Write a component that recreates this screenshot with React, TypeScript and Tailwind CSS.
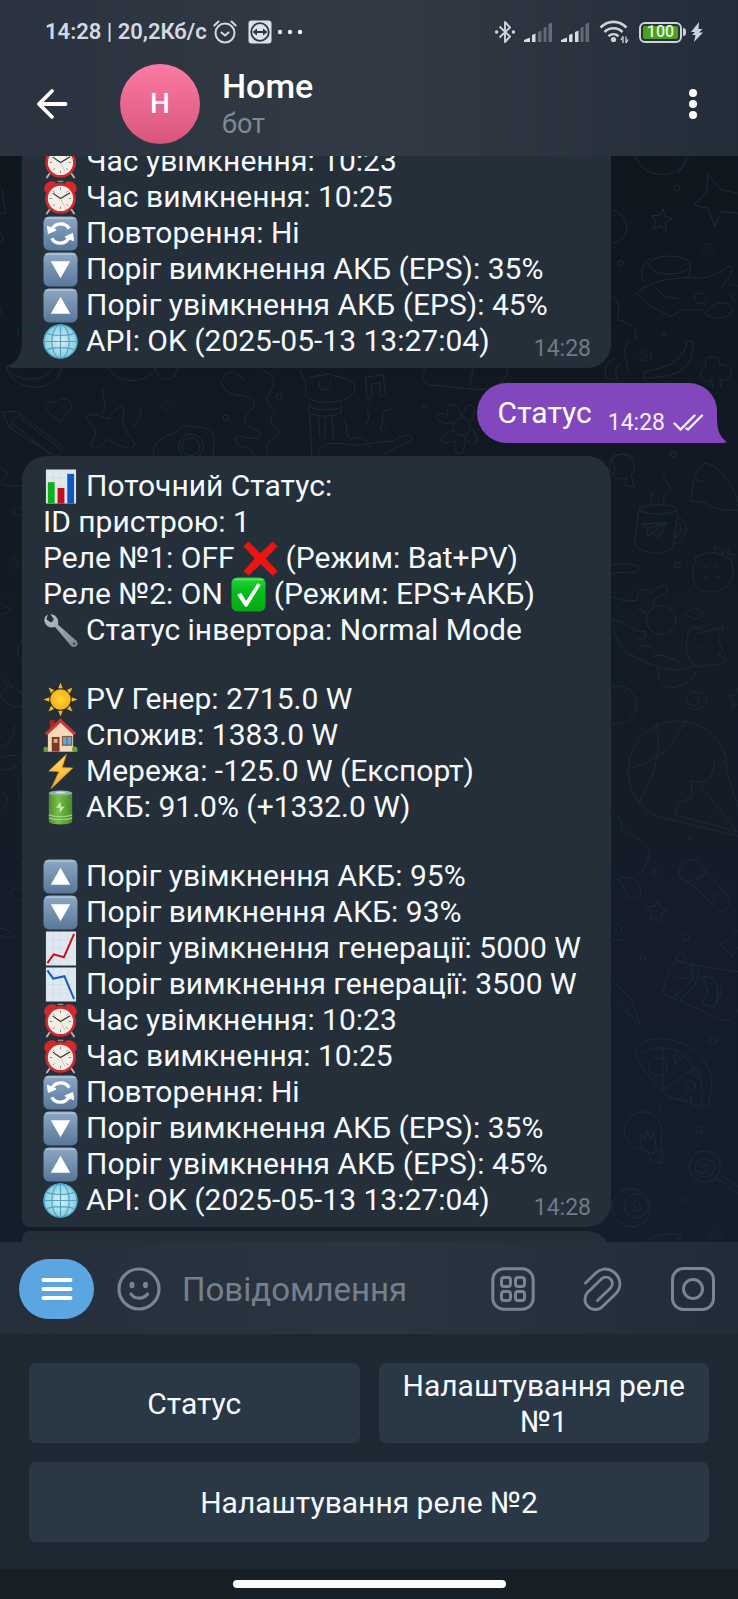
import type { ReactNode } from "react";

type EmojiName =
  | "chart"
  | "cross"
  | "check"
  | "wrench"
  | "sun"
  | "house"
  | "bolt"
  | "battery"
  | "up"
  | "down"
  | "rise"
  | "fall"
  | "alarm"
  | "repeat"
  | "globe";

const LABELS: Record<EmojiName, string> = {
  chart: "📊",
  cross: "❌",
  check: "✅",
  wrench: "🔧",
  sun: "☀️",
  house: "🏠",
  bolt: "⚡",
  battery: "🔋",
  up: "🔼",
  down: "🔽",
  rise: "📈",
  fall: "📉",
  alarm: "⏰",
  repeat: "🔄",
  globe: "🌐",
};

function Tile({ children }: { children: ReactNode }) {
  return (
    <>
      <rect x="0.5" y="0.5" width="35" height="35" rx="6" fill="url(#tile)" />
      <path d="M3 2.2H33" stroke="#b9cadb" strokeWidth="1.2" strokeLinecap="round" />
      {children}
    </>
  );
}

const ART: Record<EmojiName, ReactNode> = {
  chart: (
    <>
      <rect x="3" y="0.5" width="31" height="35" fill="#dfe7f0" />
      <path d="M3 9H34M3 18H34M3 27H34M10.5 1V35M18 1V35M25.500 1V35" stroke="#d0dbe7" strokeWidth="0.7" />
      <rect x="5" y="13.500" width="7" height="22" fill="#0fb11b" />
      <rect x="15" y="19.500" width="7" height="16" fill="#c0101b" />
      <rect x="25" y="5" width="7" height="30.500" fill="#0d57bd" />
    </>
  ),
  cross: (
    <path
      d="M5.500 1 18 13 30.500 1 35 5.500 23 18 35 31 31 35.500 18 23.500 6 35 1 31 12.500 18 1 5.500Z"
      fill="#f0130f"
      stroke="#f0130f"
      strokeLinejoin="round"
    />
  ),
  check: (
    <>
      <rect x="0.5" y="0.5" width="35" height="35" rx="6" fill="url(#green)" />
      <path d="M3 2.500H33" stroke="#5fe46b" strokeWidth="1.500" strokeLinecap="round" />
      <path d="M7 18.500 10.500 17 15.500 25.500 27.500 7 30 8 16.500 30 14.500 30Z" fill="#fff" stroke="#fff" strokeLinejoin="round" />
    </>
  ),
  wrench: (
    <>
      <path
        d="M5 1.500 C2 3 0.500 6.500 2 10 C3.500 14 8 16 12.500 14.500 L28 33 C30 36 34.500 35.500 35.500 32.500 C36 30 34.500 28.500 32.500 27 L15.500 12 C16.500 8 15 4 11 2 C9.500 1.500 8.500 1.200 7.500 1.300 L11 6 C11 8 9.500 9.500 7.500 9.500 L3.500 6.500Z"
        fill="url(#steel)"
      />
      <circle cx="32" cy="31.500" r="1.400" fill="#4b525b" />
    </>
  ),
  sun: (
    <>
      <g fill="#f8b51e">
        {[0, 45, 90, 135, 180, 225, 270, 315].map((a) => (
          <path key={a} d="M18 0.500 20.300 6.500H15.700Z" transform={`rotate(${a} 18 18)`} />
        ))}
      </g>
      <circle cx="18" cy="18" r="10.500" fill="url(#sunny)" />
    </>
  ),
  house: (
    <>
      <path d="M0.500 35V32.500H35.500V35Z" fill="#5b8f2c" />
      <path d="M7 2H12V9L7 14Z" fill="#9b2a22" />
      <path d="M5 15 18 3 31 15V34.500H5Z" fill="#f4d9bc" />
      <path d="M18 0.500 34 15.500 32 18 18 5 4 18 2 15.500Z" fill="#c23a35" />
      <rect x="9" y="19.500" width="8" height="15" fill="#7d3a20" />
      <rect x="11" y="21.500" width="4" height="4" fill="#d8b191" />
      <rect x="20" y="19" width="9.500" height="9" fill="#5fa6d8" stroke="#8a5a3c" strokeWidth="1.200" />
      <path d="M24.700 19V28" stroke="#8a5a3c" />
      <circle cx="3" cy="32" r="2.500" fill="#6aa334" />
      <circle cx="32.500" cy="32" r="2.800" fill="#6aa334" />
    </>
  ),
  bolt: (
    <path
      d="M24 0.500 6 17.500 16.500 18 8.500 35.500 30.500 14.500 19.500 14Z"
      fill="url(#spark)"
      stroke="#e9982d"
      strokeWidth="0.8"
      strokeLinejoin="round"
    />
  ),
  battery: (
    <>
      <path d="M6 3V32.500C6 36.500 30 36.500 30 32.500V3Z" fill="url(#cell)" />
      <ellipse cx="18" cy="3" rx="12" ry="2.500" fill="#8db8a6" />
      <ellipse cx="18" cy="2.600" rx="5" ry="1.100" fill="#d5e3dc" />
      <path d="M6 25.500C10 28 26 28 30 25.500M6 28.500C10 31 26 31 30 28.500" stroke="#a3d683" strokeWidth="1.200" fill="none" />
      <path d="M18 12 13.500 18.500 17.500 18 17 23.500 22.500 17 18.500 17.500Z" fill="#cdeeb4" />
    </>
  ),
  up: (
    <Tile>
      <path d="M18 9 28 26.500H8Z" fill="#fff" />
    </Tile>
  ),
  down: (
    <Tile>
      <path d="M18 27 8 9.500H28Z" fill="#fff" />
    </Tile>
  ),
  rise: (
    <>
      <rect x="3" y="0.500" width="31" height="35" fill="#dfe7f0" />
      <path d="M3 9H34M3 18H34M3 27H34M10.500 1V35M18 1V35M25.500 1V35" stroke="#d0dbe7" strokeWidth="0.7" />
      <path d="M4.500 33 11 24 21.500 27 32 3" fill="none" stroke="#c4101c" strokeWidth="2" />
    </>
  ),
  fall: (
    <>
      <rect x="3" y="0.500" width="31" height="35" fill="#dfe7f0" />
      <path d="M3 9H34M3 18H34M3 27H34M10.500 1V35M18 1V35M25.500 1V35" stroke="#d0dbe7" strokeWidth="0.7" />
      <path d="M4.500 3.500 10.500 12 22 9.500 32 33" fill="none" stroke="#0d57bd" strokeWidth="2" />
    </>
  ),
  alarm: (
    <>
      <path d="M7 30 4 34.500M29 30 32 34.500" stroke="#b9b3b3" strokeWidth="2" strokeLinecap="round" />
      <path d="M1.500 11C0 4 7 -1 14 2.500L3.500 13ZM34.500 11C36 4 29 -1 22 2.500L32.500 13Z" fill="#d3282c" />
      <path d="M15 1.500H21" stroke="#8d8d8d" strokeWidth="1.500" />
      <circle cx="18" cy="19" r="15.800" fill="#cf2b2f" />
      <circle cx="18" cy="19" r="13" fill="#f3eee6" />
      <path
        d="M18 8V10.500M18 27.500V30M7 19H9.500M26.500 19H29M10.200 11.200 12 13M25.800 11.200 24 13M10.200 26.800 12 25M25.800 26.800 24 25"
        stroke="#77716c"
        strokeWidth="0.8"
      />
      <path d="M10 13.500 18 19 28 13" fill="none" stroke="#33302e" strokeWidth="1.200" />
      <path d="M18 19 22.500 28" stroke="#c9a49e" strokeWidth="0.6" />
    </>
  ),
  repeat: (
    <Tile>
      <path d="M9.300 13.500A10.200 10.200 0 0 1 27 13" fill="none" stroke="#fff" strokeWidth="3.400" />
      <path d="M26.700 22.500A10.200 10.200 0 0 1 9 23" fill="none" stroke="#fff" strokeWidth="3.400" />
      <path d="M4.500 10.500 5.500 18 13.500 14.500Z" fill="#fff" stroke="#fff" strokeLinejoin="round" />
      <path d="M31.500 25.500 30.500 18 22.500 21.500Z" fill="#fff" stroke="#fff" strokeLinejoin="round" />
    </Tile>
  ),
  globe: (
    <>
      <circle cx="18" cy="18" r="17.500" fill="url(#world)" />
      <g fill="none" stroke="#4ca3c4" strokeWidth="1.200">
        <circle cx="18" cy="18" r="17" />
        <ellipse cx="18" cy="18" rx="9" ry="17" />
        <path d="M18 1V35M1 18H35M4 9.500C10 12.500 26 12.500 32 9.500M4 26.500C10 23.500 26 23.500 32 26.500" />
      </g>
    </>
  ),
};

function Emoji({ name }: { name: EmojiName }) {
  return (
    <svg viewBox="0 0 36 36" className="size-[35px] shrink-0" role="img" aria-label={LABELS[name]}>
      {ART[name]}
    </svg>
  );
}

function PaintDefs() {
  return (
    <svg className="absolute size-0" aria-hidden="true">
      <defs>
        <linearGradient id="tile" x1="0" y1="0" x2="0" y2="1">
          <stop offset="0" stopColor="#8ea8c4" />
          <stop offset="1" stopColor="#587799" />
        </linearGradient>
        <linearGradient id="green" x1="0" y1="0" x2="0" y2="1">
          <stop offset="0" stopColor="#2bd23c" />
          <stop offset="0.4" stopColor="#07bd1c" />
          <stop offset="1" stopColor="#06a814" />
        </linearGradient>
        <linearGradient id="steel" x1="0" y1="0" x2="1" y2="1">
          <stop offset="0" stopColor="#b9c1ca" />
          <stop offset="1" stopColor="#7c858f" />
        </linearGradient>
        <radialGradient id="sunny">
          <stop offset="0" stopColor="#ffd53a" />
          <stop offset="1" stopColor="#fbb016" />
        </radialGradient>
        <linearGradient id="spark" x1="0" y1="0" x2="0" y2="1">
          <stop offset="0" stopColor="#ffe25a" />
          <stop offset="1" stopColor="#f5a623" />
        </linearGradient>
        <linearGradient id="cell" x1="0" y1="0" x2="1" y2="0">
          <stop offset="0" stopColor="#4c8d2c" />
          <stop offset="0.4" stopColor="#78c04b" />
          <stop offset="1" stopColor="#478a28" />
        </linearGradient>
        <radialGradient id="world">
          <stop offset="0" stopColor="#dff0f4" />
          <stop offset="1" stopColor="#86cce0" />
        </radialGradient>
      </defs>
    </svg>
  );
}

const STAR = "M0 -34 8 -12 32 -10 14 6 20 30 0 18 -20 32 -14 6 -32 -8 -9 -12Z";
const SPIRAL = "M-28 20C-10 38 30 32 32 2C32 -26 -26 -34 -28 2C-28 22 12 24 10 2C8 -10 -8 -8 -6 2";

function Doodles() {
  return (
    <svg
      viewBox="0 156 738 1086"
      preserveAspectRatio="xMaxYMin slice"
      className="absolute inset-0 size-full"
      fill="none"
      stroke="#1e2b37"
      strokeWidth="3"
      strokeLinejoin="round"
      strokeLinecap="round"
      aria-hidden="true"
    >
      <g transform="translate(368 150) scale(.33333)">
        <path d="M805 20C820 90 940 90 960 25M930 70C940 60 950 40 950 22" />
        <path d={STAR} transform="translate(880 210) rotate(10)" />
        <path d="M1020 75 1060 120 1112 130M1020 75 1015 130 978 165 1020 175 1040 230 1060 185 1112 190" />
        <path d={SPIRAL} transform="translate(1018 295) scale(.6)" />
        <path d="M735 180C790 195 790 270 735 280" />
        <ellipse cx="905" cy="345" rx="62" ry="27" />
        <path d="M845 325C810 360 820 390 830 395M968 355 960 385" />
        <path d="M805 430C860 380 960 380 1000 385C1070 370 1070 350 1090 348C1100 370 1070 395 1060 410M805 430 850 470 910 500 940 480 1000 480M860 410 890 440 930 445" />
        <path d="M980 440C975 425 1015 425 1015 445C1010 470 980 465 980 440ZM1010 490C1040 450 1080 450 1095 480C1080 510 1030 510 1010 490M1080 410C1100 390 1110 410 1112 415M1085 430 1100 455" />
        <path d="M735 440C765 470 745 490 750 510C800 520 805 540 805 570M785 575C755 600 775 620 780 660M740 625C700 640 710 680 725 690M755 640C735 660 745 690 750 690" />
        <path d={SPIRAL} transform="translate(832 615) scale(.6)" />
        <path d="M955 575C950 650 850 660 830 665L825 685C960 680 975 640 975 575Z" />
        <path d="M1030 690C990 710 990 650 1015 650C1000 610 1060 610 1055 645C1100 640 1100 700 1055 690L1060 715M1030 690 1035 715" />
        <circle cx="926" cy="115" r="9" />
        <circle cx="888" cy="553" r="6" />
        <circle cx="758" cy="340" r="8" />
        <path d="M170 655C150 700 180 705 200 706L320 718C380 725 420 690 420 655M315 655 305 712" />
        <circle cx="915" cy="912" r="9" />
        <path d="M730 920C760 905 790 910 800 930" />
      </g>

      <g transform="translate(0 364) scale(.33333)">
        <path d="M20 10C40 90 170 90 185 12M30 20C60 60 140 50 160 12" />
        <path d="M325 12C350 65 450 60 465 12M468 15C470 60 530 55 532 12" />
        <path d="M180 170C120 140 130 100 165 118C180 90 230 110 210 140Z" />
        <path d="M8 145 50 142 185 245C190 270 175 280 160 272L30 192ZM30 192C30 170 45 165 60 150M40 180 150 270M60 160 180 255" />
        <path d="M260 165C255 145 290 150 325 165C350 120 380 120 370 150C360 200 400 220 405 245C390 265 350 240 320 225C300 260 270 260 275 235C300 200 280 190 260 165ZM305 150C330 120 300 100 310 75M400 190C420 170 420 150 425 130" />
        <path d={SPIRAL} transform="translate(502 125) scale(.6)" />
        <path d="M460 275C460 240 475 230 500 215L530 205C540 180 570 185 585 188L630 195C650 220 640 245 640 275" />
        <circle cx="573" cy="248" r="38" />
        <circle cx="573" cy="248" r="27" />
        <path d="M730 50C710 10 670 20 665 55C670 90 700 90 750 100C790 130 730 140 735 170C740 200 790 190 780 215C760 240 710 200 705 225C710 260 750 240 760 270M790 20C850 40 810 80 800 100C800 130 840 140 815 160C800 190 850 190 835 215C810 230 790 240 805 272" />
        <path d="M900 20 920 60C905 100 930 110 960 115C1010 115 1060 110 1065 70C1060 40 1020 45 990 30L925 40M960 50A18 18 0 1 0 990 50M930 115 925 145C950 160 1000 160 1025 145V115M930 130C960 140 1000 140 1025 130M955 155 960 220M995 155 1000 220M975 160V225M930 150 935 275M1030 160C1050 190 1030 200 1050 225C1090 210 1110 235 1110 250M955 275C955 220 1040 240 1060 245L1180 230C1230 200 1240 220 1235 228L1150 270" />
        <path d="M1100 90 1097 40 1150 32 1155 85C1150 105 1130 95 1140 80V55L1115 60V95C1110 115 1090 105 1100 90M1145 190 1150 140 1175 135M1160 190C1150 215 1135 200 1145 185M1110 120C1085 140 1120 150 1100 180" />
        <circle cx="1385" cy="188" r="26" />
        <path d="M1360 175C1300 190 1290 130 1345 155C1330 110 1380 110 1385 160C1400 100 1440 120 1415 170M1360 200C1310 210 1310 250 1365 230C1355 280 1400 290 1395 220C1420 260 1450 230 1415 195" />
        <circle cx="838" cy="98" r="9" />
        <circle cx="678" cy="162" r="9" />
        <circle cx="1273" cy="128" r="6" />
      </g>

      <g transform="translate(368 450) scale(.33333)">
        <circle cx="762" cy="50" r="37" />
        <path d="M735 75C750 50 730 30 728 25M775 85 770 105 800 112 790 80" />
        <path d="M815 170 798 280C800 300 850 310 870 310C900 305 912 300 915 285L930 190M930 205C965 210 955 250 945 262C935 280 925 280 918 278M930 220C945 225 940 255 922 262" />
        <ellipse cx="872" cy="178" rx="57" ry="14" />
        <path d="M822 222 897 218 872 262 852 248 838 262V236ZM838 236 897 218 852 248" />
        <path d="M888 75C880 95 915 100 905 125C885 140 885 150 888 158M845 125C860 140 845 145 850 158" />
        <path d="M985 320C1035 295 1060 315 1090 330C1105 380 1085 405 1070 415C1040 435 1000 425 985 410C965 370 980 340 985 320ZM1045 312C1030 280 1045 280 1065 312C1085 280 1085 300 1078 312C1110 308 1105 325 1085 328M1005 350 1015 352M1040 345 1050 350M1010 380 1018 384M1045 378 1055 382" />
        <path d="M1010 40C975 60 970 120 970 155C1000 150 1015 160 1030 170C1080 185 1100 180 1112 180M1010 40C1050 45 1060 70 1080 95C1100 120 1110 150 1112 178M985 85C1000 105 1015 90 1015 85" />
        <path d="M732 345C790 335 815 345 815 358C810 375 760 360 732 372" />
        <circle cx="880" cy="510" r="44" />
        <path d="M732 440C770 455 780 455 808 450C810 410 835 415 850 430C880 400 895 405 897 415C905 435 870 440 860 445L855 468M735 505C740 600 780 610 800 620C860 650 890 660 925 660C960 655 985 650 985 640M740 510C790 520 790 545 830 545C840 570 815 575 800 560M810 475 835 490" />
        <path d="M950 500C960 470 985 475 1000 482C1015 510 980 510 960 498M965 540C985 520 1000 540 1010 545L1068 532 1050 562 1065 602 1050 615C1080 625 1072 645 1050 645C1020 640 1000 655 980 650C950 620 950 570 965 540M985 545C990 555 1000 545 1002 548M995 588H1010" />
        <path d="M870 655C870 700 890 715 915 713C960 700 975 685 985 665M855 620C880 610 900 620 940 640M805 605C810 580 850 580 865 610" />
        <path d="M732 710C780 700 805 730 805 765C800 810 770 825 732 820" />
        <path d={SPIRAL} transform="translate(983 748)" />
        <path d={STAR} transform="translate(1110 745) scale(.9)" />
        <path d="M1080 960A150 150 0 1 0 865 1098L1110 1158M865 818C885 920 850 990 812 1060M955 812C900 900 880 930 782 955M1040 930C1035 1000 1000 1005 970 990L972 1045 932 1055 922 1095 1108 1145M1000 1010 1108 1145M1068 935 1112 1080M1045 945C1060 960 1060 940 1070 935" />
        <path d="M732 1085C760 1110 765 1110 760 1140C800 1160 830 1170 845 1200" />
        <circle cx="966" cy="1163" r="6" />
        <circle cx="928" cy="345" r="9" />
        <circle cx="916" cy="14" r="8" />
      </g>

      <g transform="translate(368 850) scale(.33333)">
        <path d="M932 75C930 50 960 25 985 28L1015 65 1085 145C1090 170 1070 185 1055 182L975 108ZM932 75 950 100C980 90 1000 80 1012 65M975 108C985 90 1000 80 1018 75M1030 155C1040 135 1055 130 1065 125" />
        <path d={STAR} transform="translate(867 183) rotate(8)" />
        <path d="M735 270C765 275 775 265 770 265M735 220C765 215 765 245 755 252C740 255 738 240 745 238" />
        <path d="M735 95C760 80 770 80 800 85C820 110 820 120 815 135C800 150 785 145 780 140L752 85M842 5C845 30 830 60 800 85" />
        <path d="M930 330C900 350 890 400 885 430L1060 508C1090 520 1105 500 1108 480M930 330 970 345 1112 365M970 345C990 400 940 420 920 440M990 355C1000 400 960 420 940 450M905 370C940 400 960 380 975 370M1005 380C1060 375 1055 440 1040 470C1010 470 1000 460 1005 450L1020 425ZM1060 400C1065 430 1050 450 1040 470" />
        <circle cx="938" cy="325" r="14" />
        <path d="M802 605C830 560 870 565 900 568C1000 590 1030 650 1030 700C1030 760 1015 772 1010 772C900 740 885 735 882 720C820 660 810 630 802 605ZM820 608C850 590 920 580 965 635C1010 690 1005 730 1000 768M885 590V720L985 650M935 750C945 725 965 725 970 752" />
        <circle cx="870" cy="650" r="27" />
        <path d="M920 612 945 628 922 642Z" />
        <circle cx="968" cy="707" r="14" />
        <circle cx="985" cy="665" r="13" />
        <path d="M795 890C750 860 765 790 825 785C875 790 890 840 878 870L885 910 878 940 850 935 840 905C820 895 810 895 795 890ZM820 890 815 850 830 870 838 842 848 868 858 845 865 900M842 912 882 900M833 752V745M785 768 780 765M872 770 878 762" />
        <circle cx="1010" cy="950" r="47" />
        <path d={SPIRAL} transform="translate(1010 950)" />
        <path d="M1045 985 1112 1032M1057 975 1112 1010" />
        <circle cx="790" cy="1073" r="57" />
        <circle cx="805" cy="1068" r="36" />
        <path d="M800 1052V1082H812C825 1078 818 1066 808 1067C820 1062 815 1050 800 1052" />
        <path d={SPIRAL} transform="translate(1040 1148) scale(.7)" />
        <path d="M845 1168C870 1150 910 1152 940 1155L930 1170M735 395 790 445 815 525M735 430 800 510M735 455 790 500" />
        <path d="M1055 285C1080 270 1090 260 1112 240M1055 285C1070 295 1085 300 1090 320L1112 290" />
        <circle cx="955" cy="262" r="10" />
        <circle cx="825" cy="323" r="8" />
        <circle cx="1035" cy="572" r="10" />
        <circle cx="993" cy="840" r="10" />
        <circle cx="940" cy="1050" r="8" />
        <circle cx="860" cy="67" r="6" />
      </g>

      <g transform="translate(0 440) scale(.33333)">
        <path d="M0 82 25 100 0 125M0 132C30 140 50 135 66 140M66 200C40 210 30 215 40 220L66 228M0 485 15 500 32 505 20 520 0 525" />
        <path d={STAR} transform="translate(42 370) scale(.55)" />
        <path d="M66 600C45 630 50 650 66 655M0 690 36 740 66 760M0 710 28 745M36 740C10 740 5 760 0 770C30 805 50 800 66 800M42 855C50 890 20 915 5 918M0 955C30 940 60 945 60 960C55 985 20 990 0 990M66 1000C50 1010 50 1050 60 1060C50 1080 55 1090 66 1095M0 1055C20 1055 25 1070 20 1085C10 1110 5 1110 0 1110M66 1240C50 1250 45 1260 66 1270M66 1350C40 1340 30 1350 30 1360C40 1370 40 1390 66 1380M0 1465C20 1465 40 1480 45 1490C30 1495 10 1490 0 1485" />
      </g>
      <g transform="translate(0 150) scale(.33333)">
        <path d="M0 110C15 120 5 135 10 150L18 190H0M60 530C50 540 52 550 55 560M0 470C8 480 5 490 0 495M0 250C10 255 12 270 0 280" />
      </g>
    </svg>
  );
}

type Part = string | { e: EmojiName };
type Row = Part[];

const e = (name: EmojiName): Part => ({ e: name });

const SCHEDULE: Row[] = [
  [e("alarm"), "Час увімкнення: 10:23"],
  [e("alarm"), "Час вимкнення: 10:25"],
  [e("repeat"), "Повторення: Ні"],
  [e("down"), "Поріг вимкнення АКБ (EPS): 35%"],
  [e("up"), "Поріг увімкнення АКБ (EPS): 45%"],
  [e("globe"), "API: OK (2025-05-13 13:27:04)"],
];

const STATUS: Row[] = [
  [e("chart"), "Поточний Статус:"],
  ["ID пристрою: 1"],
  ["Реле №1: OFF", e("cross"), "(Режим: Bat+PV)"],
  ["Реле №2: ON", e("check"), "(Режим: EPS+АКБ)"],
  [e("wrench"), "Статус інвертора: Normal Mode"],
  [],
  [e("sun"), "PV Генер: 2715.0 W"],
  [e("house"), "Спожив: 1383.0 W"],
  [e("bolt"), "Мережа: -125.0 W (Експорт)"],
  [e("battery"), "АКБ: 91.0% (+1332.0 W)"],
  [],
  [e("up"), "Поріг увімкнення АКБ: 95%"],
  [e("down"), "Поріг вимкнення АКБ: 93%"],
  [e("rise"), "Поріг увімкнення генерації: 5000 W"],
  [e("fall"), "Поріг вимкнення генерації: 3500 W"],
  ...SCHEDULE,
];

function Lines({ rows, time }: { rows: Row[]; time: string }) {
  return (
    <>
      {rows.map((row, i) =>
        row.length === 0 ? (
          <div key={i} className="h-[33px]" />
        ) : (
          <div key={i} className="flex h-9 items-center gap-2 whitespace-nowrap">
            {row.map((part, j) =>
              typeof part === "string" ? <span key={j}>{part}</span> : <Emoji key={j} name={part.e} />
            )}
            {i === rows.length - 1 && (
              <time className="-mb-0.5 ml-auto self-end text-[23px] leading-6 text-[#6f7b87]">{time}</time>
            )}
          </div>
        )
      )}
    </>
  );
}

function StatusIcons() {
  return (
    <div className="flex items-center text-[#ccd3dc]">
      <svg viewBox="0 0 20 24" className="h-6 w-5" fill="none" stroke="currentColor" strokeWidth="1.900" strokeLinejoin="round" aria-label="Bluetooth">
        <path d="M4.500 6.500 15 16.500 10 22V2L15 7.500 4.500 17.500" />
        <circle cx="1.600" cy="12" r="0.800" fill="currentColor" />
        <circle cx="18.400" cy="12" r="0.800" fill="currentColor" />
      </svg>
      {[2, 3].map((level) => (
        <svg key={level} viewBox="0 0 28 20" className="ml-[9px] h-5 w-7" aria-label="Сигнал">
          {[
            "M0 20V18L6 15.500V20Z",
            "M8 20V13L11.500 11.500V20Z",
            "M14 20V10L17.500 8.500V20Z",
            "M19.500 20V6L22.500 4.500V20Z",
            "M24.500 20V2L28 0.500V20Z",
          ].map((d, i) => (
            <path key={d} d={d} fill={i < level ? "#d5dbe3" : "#626b78"} />
          ))}
        </svg>
      ))}
      <svg viewBox="0 0 30 24" className="ml-2.5 h-6 w-[30px]" fill="none" stroke="currentColor" strokeWidth="2.600" aria-label="Wi-Fi">
        <path d="M1.500 7.500C9 0 20 0 27.500 7.500M5.500 12C10.500 7 18.500 7 23.500 12M9.500 16.300C12.500 13.500 16.500 13.500 19.500 16.300" />
        <circle cx="14.500" cy="19.500" r="2.600" fill="currentColor" stroke="none" />
        <path d="M24 16.500V23M27 16.500V23" strokeWidth="1.300" />
        <path d="M22 20 24 16.500M29 19.500 27 23" strokeWidth="1.300" />
      </svg>
      <div className="ml-2.5 flex h-[21px] w-[43px] items-center justify-center rounded-[6px] border-2 border-[#ccd3dc] p-0.5">
        <span className="flex h-full w-full items-center justify-center rounded-[2px] bg-[#48a01c] text-[16px] leading-4 font-medium text-[#e9f5e0]">
          100
        </span>
      </div>
      <span className="ml-px h-2 w-[3px] rounded-r-sm bg-[#ccd3dc]" />
      <svg viewBox="0 0 14 22" className="ml-1 h-[22px] w-3.5" fill="currentColor" aria-label="Заряджання">
        <path d="M9 1 1 11H5L2 14H5.500L4 21 13 11.500H9L12.500 8H8.500Z" />
      </svg>
    </div>
  );
}

function Header() {
  return (
    <header className="flex h-[156px] shrink-0 flex-col bg-linear-to-r from-[#2a323f] via-[#323a45] to-[#232d39] px-[30px] pt-5">
      <div className="flex h-6 items-center justify-between pr-1 pl-[15px]">
        <div className="flex items-center text-[22px] leading-6 font-semibold whitespace-nowrap text-[#d3d9e1]">
          <span>14:28 | 20,2Кб/с</span>
          <svg viewBox="0 0 24 24" className="ml-1.5 size-6" fill="none" stroke="currentColor" strokeWidth="2" strokeLinecap="round" aria-label="Будильник">
            <circle cx="12" cy="13" r="9.500" />
            <path d="M1.300 5.500 5.500 1.500M22.700 5.500 18.500 1.500M8.500 12.500 12 15.500 15.500 12.500" />
          </svg>
          <svg viewBox="0 0 24 24" className="ml-[11px] size-6" aria-label="TeamViewer">
            <rect x="0.500" y="0.500" width="23" height="23" rx="3" fill="#dbe1e8" />
            <circle cx="12" cy="12" r="8.800" fill="none" stroke="#2f3744" strokeWidth="1.800" />
            <path d="M4.500 12 9 8.500V11H15V8.500L19.500 12 15 15.500V13H9V15.500Z" fill="#2f3744" />
          </svg>
          <svg viewBox="0 0 26 6" className="ml-[5px] h-1.5 w-[26px]" fill="#eef2f6" aria-hidden="true">
            <circle cx="3" cy="3" r="2.200" />
            <circle cx="13" cy="3" r="2.200" />
            <circle cx="23" cy="3" r="2.200" />
          </svg>
        </div>
        <StatusIcons />
      </div>
      <div className="mt-5 flex h-20 items-center">
        <button aria-label="Назад" className="flex size-11 items-center">
          <svg viewBox="0 0 44 44" className="size-11" fill="none" stroke="#fff" strokeWidth="3.800" strokeLinecap="round" strokeLinejoin="round">
            <path d="M22 9 9 22 22 35M9 22H35.500" />
          </svg>
        </button>
        <div className="ml-[46px] flex size-20 shrink-0 items-center justify-center rounded-full bg-linear-to-b from-[#fb7ba4] to-[#d9557b] text-[28px] font-medium text-white">
          H
        </div>
        <div className="ml-5 flex flex-1 flex-col pt-0.5 pl-0.5">
          <h1 className="text-[34px] leading-9 font-medium text-white">Home</h1>
          <p className="pt-0.5 text-[27px] leading-9 text-[#7f8a97]">бот</p>
        </div>
        <button aria-label="Меню" className="flex h-11 w-[30px] items-center justify-center">
          <svg viewBox="0 0 8 30" className="h-[30px] w-2" fill="#fff">
            <circle cx="4" cy="4" r="4" />
            <circle cx="4" cy="15" r="4" />
            <circle cx="4" cy="26" r="4" />
          </svg>
        </button>
      </div>
    </header>
  );
}

function Chat() {
  return (
    <main className="relative min-h-0 flex-1 overflow-hidden bg-linear-to-b from-[#0f161e] via-[#131b27] to-[#131e2a]">
      <Doodles />
      <div className="relative flex h-full flex-col justify-end pr-[11px] pl-[22px] text-[30px] leading-9 text-[#f5f9fd]">
        <div className="flex shrink-0">
          <article className="relative w-[589px] rounded-br-[24px] bg-[#242f3a] pr-5 pb-[9px] pl-[21px]">
            <svg viewBox="0 0 17 26" className="absolute bottom-0 -left-4 h-[26px] w-[17px]" fill="#242f3a" aria-hidden="true">
              <path d="M17 0H16C16 14 10 21 0 24.500C2 26 6 26 17 26Z" />
            </svg>
            <Lines rows={SCHEDULE} time="14:28" />
          </article>
        </div>

        <div className="mt-[15px] flex shrink-0 justify-end pr-2.5">
          <article className="relative flex h-[60px] items-center gap-4 rounded-l-[30px] rounded-tr-[28px] bg-[#8247bd] pr-[13px] pl-[21px]">
            <svg viewBox="0 0 11 26" className="absolute -right-2.5 bottom-0 h-[26px] w-[11px]" fill="#8247bd" aria-hidden="true">
              <path d="M0 0H1C1 14 4 20 11 25C9 26 6 26 0 26Z" />
            </svg>
            <p className="text-white">Статус</p>
            <div className="flex items-center gap-2 pt-5">
              <time className="text-[23px] leading-6 text-[#f6effc]">14:28</time>
              <svg viewBox="0 0 31 18" className="h-[18px] w-[31px]" fill="none" stroke="#f6effc" strokeWidth="2.400" strokeLinecap="round" aria-label="Прочитано">
                <path d="M1.500 9.500 7.500 15.500 21.500 1.500M13.500 14.500 15 15.500 29 1.500" />
              </svg>
            </div>
          </article>
        </div>

        <article className="mt-[13px] w-[589px] shrink-0 rounded-t-[24px] rounded-br-[24px] rounded-bl-[8px] bg-[#242f3a] pt-3 pr-5 pb-[9px] pl-[21px]">
          <Lines rows={STATUS} time="14:28" />
        </article>

        <div className="mt-1 h-[11px] w-[589px] shrink-0 overflow-hidden">
          <div className="h-16 rounded-tl-[8px] rounded-tr-[24px] bg-[#242f3a]" />
        </div>
      </div>
    </main>
  );
}

function InputBar() {
  return (
    <form
      className="flex h-[92px] shrink-0 items-center bg-linear-to-r from-[#252f3c] via-[#2a3541] to-[#212c39] pt-0.5 pr-[23px] pl-[19px] text-[#7a8591]"
      onSubmit={(event) => event.preventDefault()}
    >
      <button type="button" aria-label="Команди" className="flex h-[60px] w-[75px] shrink-0 items-center justify-center rounded-[30px] bg-[#5ba6e0]">
        <svg viewBox="0 0 32 24" className="h-6 w-8" stroke="#fff" strokeWidth="4" strokeLinecap="round">
          <path d="M2.500 3H29.500M2.500 12H29.500M2.500 21H29.500" />
        </svg>
      </button>
      <button type="button" aria-label="Емодзі" className="ml-[23px] shrink-0">
        <svg viewBox="0 0 44 44" className="size-11" fill="none" stroke="currentColor" strokeWidth="3.200" strokeLinecap="round">
          <circle cx="22" cy="22" r="20" />
          <path d="M14 27C17.500 32.500 26.500 32.500 30.500 27" />
          <ellipse cx="15" cy="18" rx="2.500" ry="3.200" fill="currentColor" stroke="none" />
          <ellipse cx="28.500" cy="18" rx="2.500" ry="3.200" fill="currentColor" stroke="none" />
        </svg>
      </button>
      <input
        aria-label="Повідомлення"
        placeholder="Повідомлення"
        className="ml-[21px] h-11 min-w-0 flex-1 bg-transparent text-[33px] leading-10 text-white outline-none placeholder:text-[#74808c]"
      />
      <button type="button" aria-label="Клавіатура бота" className="shrink-0">
        <svg viewBox="0 0 44 44" className="size-11" fill="none" stroke="currentColor" strokeWidth="3">
          <rect x="1.800" y="1.800" width="40.400" height="40.400" rx="11" />
          <rect x="10.500" y="10.500" width="9" height="9" rx="2.500" />
          <rect x="24.500" y="10.500" width="9" height="9" rx="2.500" />
          <rect x="10.500" y="24.500" width="9" height="9" rx="2.500" />
          <rect x="24.500" y="24.500" width="9" height="9" rx="2.500" />
        </svg>
      </button>
      <button type="button" aria-label="Прикріпити" className="ml-[46px] shrink-0">
        <svg viewBox="0 0 44 44" className="size-11" fill="none" stroke="currentColor" strokeWidth="2.900" strokeLinecap="round" strokeLinejoin="round">
          <path d="M4.500 16 14 6.800C19 1.500 26.500 0.500 32 4.500C40 10 41 20 35 26.500L21.500 39.500C18 43.500 11 43.500 7 39.500C3 35.500 3 29.500 6.500 25.500L20.500 12C23 9.500 27 9.500 29.500 12C32 14.500 32 18.500 29.500 21L16.500 33.500" />
        </svg>
      </button>
      <button type="button" aria-label="Камера" className="ml-[46px] shrink-0">
        <svg viewBox="0 0 44 44" className="size-11" fill="none" stroke="currentColor" strokeWidth="3">
          <rect x="1.500" y="1.500" width="41" height="41" rx="11" />
          <circle cx="22" cy="22" r="9.500" />
        </svg>
      </button>
    </form>
  );
}

function ReplyKey({ children, wide = false }: { children: ReactNode; wide?: boolean }) {
  return (
    <button
      className={`flex h-20 items-center justify-center rounded-[7px] bg-[#2a3745] px-4 pt-0.5 text-center text-[30px] leading-9 text-[#f5f9fd] ${
        wide ? "col-span-2" : ""
      }`}
    >
      {children}
    </button>
  );
}

export default function App() {
  return (
    <div className="flex h-screen flex-col overflow-hidden bg-[#171f27] font-[Roboto,sans-serif]">
      <PaintDefs />
      <Header />
      <Chat />
      <InputBar />
      <section aria-label="Клавіатура" className="grid shrink-0 grid-cols-2 gap-[19px] bg-[#1e2832] px-[29px] pt-[29px] pb-[27px]">
        <ReplyKey>Статус</ReplyKey>
        <ReplyKey>Налаштування реле №1</ReplyKey>
        <ReplyKey wide>Налаштування реле №2</ReplyKey>
      </section>
      <footer className="flex h-[30px] shrink-0 items-center justify-center">
        <div className="h-2 w-[273px] rounded-full bg-white" />
      </footer>
    </div>
  );
}
